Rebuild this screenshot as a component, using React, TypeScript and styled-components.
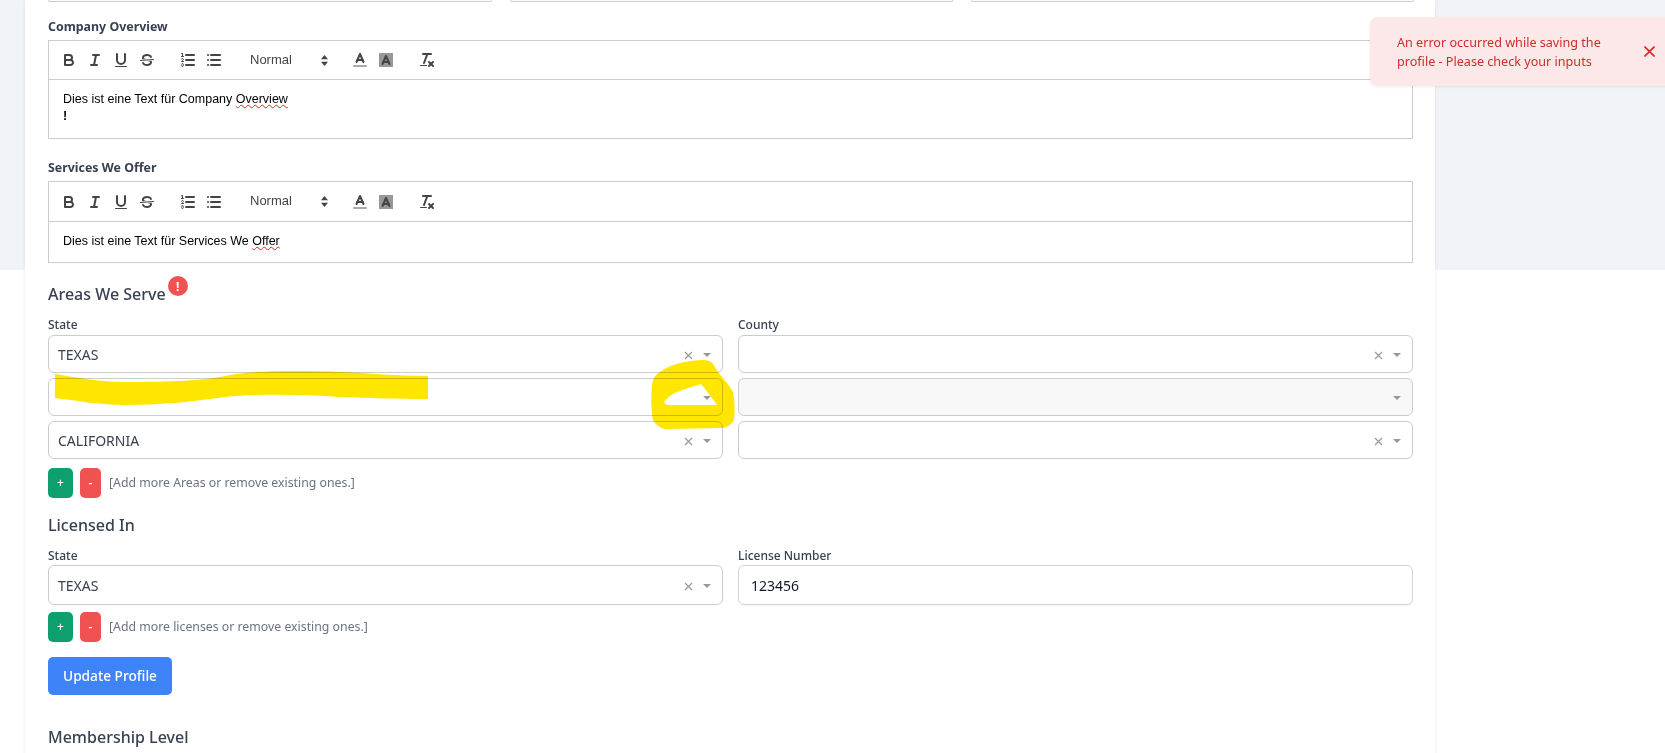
import { FC, ReactNode } from 'react';
import styled, { createGlobalStyle } from 'styled-components';

const GlobalStyle = createGlobalStyle`
  html, body {
    margin: 0;
    padding: 0;
    height: 753px;
    overflow: hidden;
    background: #fff;
  }

  * {
    box-sizing: border-box;
  }
`;

const Page = styled.div`
  position: relative;
  width: 1665px;
  height: 753px;
  overflow: hidden;
  padding-left: 25px;
  background: linear-gradient(#f0f3f8 270px, #fff 270px);
  font-family: 'Noto Sans', 'Open Sans', sans-serif;
  color: #374151;
`;

const Card = styled.main`
  width: 1410px;
  height: 800px;
  padding: 0 22px 0 23px;
  background: #fff;
  box-shadow: 0 0 4px rgba(0, 0, 0, 0.08);
`;

const TopRow = styled.div`
  display: grid;
  grid-template-columns: 444px 443px 443px;
  gap: 18px;
  width: 1365px;
`;

const TopField = styled.div`
  height: 2px;
  border: 1px solid #ccc;
  border-top: 0;
  border-radius: 0 0 6px 6px;
`;

const FieldLabel = styled.label`
  display: block;
  height: 16px;
  font-size: 12px;
  line-height: 16px;
  font-weight: 500;
  color: #374151;
`;

const EditorLabel = styled(FieldLabel)<{ $top: number }>`
  margin: ${({ $top }) => $top}px 0 5px;
  font-size: 12.4px;
  font-weight: 700;
`;

const Editor = styled.div`
  width: 1365px;
  border: 1px solid #ccc;
`;

const Toolbar = styled.div<{ $tall?: boolean }>`
  display: flex;
  align-items: center;
  height: ${({ $tall }) => ($tall ? '40px' : '39px')};
  padding-left: 7px;
  border-bottom: 1px solid #ccc;
`;

const ToolGroup = styled.div`
  display: flex;
  margin-right: 15px;
`;

const ToolButton = styled.span`
  display: block;
  width: 26px;
  height: 24px;
  padding: 3px 4px;
`;

const ToolIcon = styled.svg`
  display: block;
  width: 18px;
  height: 18px;
  fill: none;
  stroke: #444;
  stroke-width: 2;
  stroke-linecap: round;
  stroke-linejoin: round;
`;

const Picker = styled.div`
  display: flex;
  align-items: center;
  justify-content: space-between;
  width: 90px;
  height: 24px;
  margin-right: 15px;
  padding: 0 4px 0 8px;
  font-family: 'Liberation Sans', Arial, sans-serif;
  font-size: 13px;
  color: #444;
`;

const PickerLabel = styled.span`
  margin-top: -2px;
`;

const PickerArrows = styled.svg`
  display: block;
  width: 7px;
  height: 11px;
  fill: #444;
`;

const EditorBody = styled.div<{ $height: number }>`
  height: ${({ $height }) => $height}px;
  padding: 11px 14px 0;
  font-family: 'Liberation Sans', Arial, sans-serif;
  font-size: 12.5px;
  line-height: 17px;
  color: #000;
`;

const Misspelled = styled.span`
  text-decoration: underline wavy #e02424 1px;
  text-underline-offset: 1px;
`;

const HeadingRow = styled.div<{ $top: number }>`
  display: flex;
  align-items: flex-start;
  height: 22px;
  margin-top: ${({ $top }) => $top}px;
`;

const Heading = styled.h3`
  margin: 0;
  font-size: 16px;
  line-height: 20px;
  font-weight: 500;
  color: #374151;
`;

const ErrorBadge = styled.span`
  position: relative;
  top: -8px;
  left: 2px;
  display: flex;
  align-items: center;
  justify-content: center;
  width: 20px;
  height: 20px;
  border-radius: 50%;
  background: #f05252;
  color: #fff;
  font-size: 12px;
  font-weight: 700;
`;

const FieldGrid = styled.div<{ $top: number }>`
  display: grid;
  grid-template-columns: 675px 675px;
  column-gap: 15px;
  margin-top: ${({ $top }) => $top}px;
`;

const Column = styled.div`
  display: flex;
  flex-direction: column;
`;

const Stack = styled.div<{ $top: number }>`
  display: flex;
  flex-direction: column;
  gap: 5px;
  margin-top: ${({ $top }) => $top}px;
`;

const SelectBox = styled.div<{ $disabled?: boolean; $height?: number }>`
  display: flex;
  align-items: center;
  height: ${({ $height }) => $height ?? 38}px;
  padding: 2px 11px 0 9px;
  border: 1px solid #ccc;
  border-radius: 6px;
  background: ${({ $disabled }) => ($disabled ? '#f8f8f8' : '#fff')};
  font-size: 14px;
  color: #374151;
`;

const SelectValue = styled.span`
  flex: 1;
  margin-top: -2px;
`;

const ClearIcon = styled.svg`
  display: block;
  width: 9px;
  height: 9px;
  margin-right: 10px;
  stroke: #999;
  stroke-width: 1.2;
  fill: none;
`;

const CaretIcon = styled.svg`
  display: block;
  width: 8px;
  height: 4px;
  fill: #999;
`;

const TextInput = styled.div`
  display: flex;
  align-items: center;
  height: 40px;
  margin-top: 1px;
  padding: 0 12px;
  border: 1px solid #d1d5db;
  border-radius: 6px;
  box-shadow: 0 1px 2px rgba(0, 0, 0, 0.05);
  font-size: 14px;
  color: #111827;
`;

const ActionRow = styled.div<{ $top: number }>`
  display: flex;
  align-items: center;
  margin-top: ${({ $top }) => $top}px;
`;

const RowButton = styled.button<{ $remove?: boolean }>`
  width: ${({ $remove }) => ($remove ? '21px' : '25px')};
  height: 30px;
  margin-right: 7px;
  padding: 0 0 2px;
  border: 0;
  border-radius: 5px;
  background: ${({ $remove }) => ($remove ? '#f05252' : '#0e9f6e')};
  color: #fff;
  font-family: inherit;
  font-size: 12px;
  font-weight: 500;
`;

const Hint = styled.span`
  margin: -2px 0 0 1px;
  font-size: 12.3px;
  color: #6b7280;
`;

const SubmitButton = styled.button`
  display: block;
  width: 124px;
  height: 38px;
  margin-top: 15px;
  padding: 0 0 2px;
  border: 0;
  border-radius: 5px;
  background: #3f83f8;
  color: #fff;
  font-family: inherit;
  font-size: 13.7px;
  font-weight: 500;
`;

const Toast = styled.div`
  position: absolute;
  top: 17px;
  left: 1370px;
  display: flex;
  align-items: center;
  width: 300px;
  height: 69px;
  padding-left: 27px;
  border-radius: 8px 0 0 8px;
  background: #fce8e8;
  box-shadow: 0 1px 3px rgba(0, 0, 0, 0.08);
  color: #d02b2b;
  font-size: 12.6px;
  line-height: 19px;
`;

const ToastText = styled.p`
  width: 225px;
  margin: 0;
`;

const ToastClose = styled.svg`
  display: block;
  width: 11px;
  height: 11px;
  margin-left: 22px;
  stroke: #e02424;
  stroke-width: 1.6;
  fill: none;
`;

const Scribble = styled.svg`
  position: absolute;
  top: 0;
  left: 0;
  width: 1665px;
  height: 753px;
  pointer-events: none;
  mix-blend-mode: multiply;
`;

const Icon: FC<{ children: ReactNode }> = ({ children }) => (
  <ToolButton>
    <ToolIcon viewBox="0 0 18 18">{children}</ToolIcon>
  </ToolButton>
);

const EditorToolbar: FC<{ tall?: boolean }> = ({ tall }) => (
  <Toolbar $tall={tall}>
    <ToolGroup>
      <Icon>
        <path d="M5,4H9.5A2.5,2.5,0,0,1,12,6.5v0A2.5,2.5,0,0,1,9.5,9H5A0,0,0,0,1,5,9V4A0,0,0,0,1,5,4Z" />
        <path d="M5,9h5.5A2.5,2.5,0,0,1,13,11.5v0A2.5,2.5,0,0,1,10.5,14H5a0,0,0,0,1,0,0V9A0,0,0,0,1,5,9Z" />
      </Icon>
      <Icon>
        <line x1="7" x2="13" y1="4" y2="4" />
        <line x1="5" x2="11" y1="14" y2="14" />
        <line x1="8" x2="10" y1="14" y2="4" />
      </Icon>
      <Icon>
        <path d="M5,3V9a4.012,4.012,0,0,0,4,4H9a4.012,4.012,0,0,0,4-4V3" />
        <rect x="3" y="15" width="12" height="1" rx=".5" fill="#444" stroke="none" />
      </Icon>
      <Icon>
        <line x1="15.5" x2="2.5" y1="8.5" y2="9.5" strokeWidth="1" />
        <path fill="#444" stroke="none" d="M9.007,8C6.542,7.791,6,7.519,6,6.5,6,5.792,7.283,5,9,5c1.571,0,2.765.679,2.969,1.309a1,1,0,0,0,1.9-.617C13.356,4.106,11.354,3,9,3,6.2,3,4,4.538,4,6.5a3.2,3.2,0,0,0,.5,1.843Z" />
        <path fill="#444" stroke="none" d="M8.984,10C11.457,10.208,12,10.479,12,11.5c0,.708-1.283,1.5-3,1.5-1.571,0-2.765-.679-2.969-1.309a1,1,0,1,0-1.9.617C4.644,13.894,6.646,15,9,15c2.8,0,5-1.538,5-3.5a3.2,3.2,0,0,0-.5-1.843Z" />
      </Icon>
    </ToolGroup>
    <ToolGroup>
      <Icon>
        <line x1="7" x2="15" y1="4" y2="4" />
        <line x1="7" x2="15" y1="9" y2="9" />
        <line x1="7" x2="15" y1="14" y2="14" />
        <line x1="2.5" x2="4.5" y1="5.5" y2="5.5" strokeWidth="1" />
        <path fill="#444" stroke="none" d="M3.5,6A0.5,0.5,0,0,1,3,5.5V3.085l-0.276.138A0.5,0.5,0,0,1,2.053,3c-0.124-.247-0.023-0.324.224-0.447l1-.5A0.5,0.5,0,0,1,4,2.5v3A0.5,0.5,0,0,1,3.5,6Z" />
        <path strokeWidth="1" d="M4.5,10.5h-2c0-.234,1.85-1.076,1.85-2.234A0.959,0.959,0,0,0,2.5,8.156" />
        <path strokeWidth="1" d="M2.5,14.846a0.959,0.959,0,0,0,1.85-.109A0.7,0.7,0,0,0,3.75,14a0.688,0.688,0,0,0,.6-0.736,0.959,0.959,0,0,0-1.85-.109" />
      </Icon>
      <Icon>
        <line x1="6" x2="15" y1="4" y2="4" />
        <line x1="6" x2="15" y1="9" y2="9" />
        <line x1="6" x2="15" y1="14" y2="14" />
        <line x1="3" x2="3" y1="4" y2="4" />
        <line x1="3" x2="3" y1="9" y2="9" />
        <line x1="3" x2="3" y1="14" y2="14" />
      </Icon>
    </ToolGroup>
    <Picker>
      <PickerLabel>Normal</PickerLabel>
      <PickerArrows viewBox="0 0 7 11">
        <path d="M3.5 0 7 4.2H0ZM0 6.8h7L3.5 11Z" />
      </PickerArrows>
    </Picker>
    <ToolGroup>
      <Icon>
        <line x1="3" x2="15" y1="15" y2="15" stroke="#aaa" />
        <polyline points="5.5 11 9 3 12.5 11" />
        <line x1="11.63" x2="6.38" y1="9" y2="9" />
      </Icon>
      <Icon>
        <defs>
          <pattern id={tall ? 'dither-b' : 'dither-a'} width="2" height="2" patternUnits="userSpaceOnUse">
            <rect width="1" height="1" fill="#444" />
            <rect x="1" y="1" width="1" height="1" fill="#444" />
          </pattern>
        </defs>
        <rect x="2" y="2" width="14" height="14" stroke="none" fill={`url(#${tall ? 'dither-b' : 'dither-a'})`} opacity="0.55" />
        <polyline points="5.5 13 9 5 12.5 13" />
        <line x1="11.63" x2="6.38" y1="11" y2="11" />
      </Icon>
    </ToolGroup>
    <ToolGroup>
      <Icon>
        <line x1="5" x2="13" y1="3" y2="3" />
        <line x1="6" x2="9.35" y1="12" y2="3" />
        <line x1="11" x2="15" y1="11" y2="15" />
        <line x1="15" x2="11" y1="11" y2="15" />
        <rect x="2" y="14" width="7" height="1" rx=".5" fill="#444" stroke="none" />
      </Icon>
    </ToolGroup>
  </Toolbar>
);

const Select: FC<{ value?: string; clearable?: boolean; disabled?: boolean; height?: number }> = ({
  value,
  clearable = true,
  disabled,
  height,
}) => (
  <SelectBox $disabled={disabled} $height={height}>
    <SelectValue>{value}</SelectValue>
    {clearable && (
      <ClearIcon viewBox="0 0 9 9">
        <path d="M1 1l7 7M8 1 1 8" />
      </ClearIcon>
    )}
    <CaretIcon viewBox="0 0 8 4">
      <path d="M0 0h8L4 4Z" />
    </CaretIcon>
  </SelectBox>
);

const RowActions: FC<{ top: number; hint: string }> = ({ top, hint }) => (
  <ActionRow $top={top}>
    <RowButton type="button">+</RowButton>
    <RowButton type="button" $remove>
      -
    </RowButton>
    <Hint>{hint}</Hint>
  </ActionRow>
);

export default function App() {
  return (
    <Page>
      <GlobalStyle />
      <Card>
        <TopRow>
          <TopField />
          <TopField />
          <TopField />
        </TopRow>

        <EditorLabel $top={17}>Company Overview</EditorLabel>
        <Editor>
          <EditorToolbar />
          <EditorBody $height={58}>
            Dies ist eine Text für Company <Misspelled>Overview</Misspelled>
            <br />
            <b>!</b>
          </EditorBody>
        </Editor>

        <EditorLabel $top={21}>Services We Offer</EditorLabel>
        <Editor>
          <EditorToolbar tall />
          <EditorBody $height={40}>
            Dies ist eine Text für Services We <Misspelled>Offer</Misspelled>
          </EditorBody>
        </Editor>

        <HeadingRow $top={21}>
          <Heading>Areas We Serve</Heading>
          <ErrorBadge>!</ErrorBadge>
        </HeadingRow>
        <FieldGrid $top={11}>
          <Column>
            <FieldLabel>State</FieldLabel>
            <Stack $top={2}>
              <Select value="TEXAS" />
              <Select clearable={false} />
              <Select value="CALIFORNIA" />
            </Stack>
          </Column>
          <Column>
            <FieldLabel>County</FieldLabel>
            <Stack $top={2}>
              <Select />
              <Select clearable={false} disabled />
              <Select />
            </Stack>
          </Column>
        </FieldGrid>
        <RowActions top={9} hint="[Add more Areas or remove existing ones.]" />

        <HeadingRow $top={17}>
          <Heading>Licensed In</Heading>
        </HeadingRow>
        <FieldGrid $top={11}>
          <Column>
            <FieldLabel>State</FieldLabel>
            <Stack $top={1}>
              <Select value="TEXAS" height={40} />
            </Stack>
          </Column>
          <Column>
            <FieldLabel>License Number</FieldLabel>
            <TextInput>123456</TextInput>
          </Column>
        </FieldGrid>
        <RowActions top={7} hint="[Add more licenses or remove existing ones.]" />

        <SubmitButton type="button">Update Profile</SubmitButton>

        <HeadingRow $top={32}>
          <Heading>Membership Level</Heading>
        </HeadingRow>
      </Card>

      <Toast>
        <ToastText>An error occurred while saving the profile - Please check your inputs</ToastText>
        <ToastClose viewBox="0 0 11 11">
          <path d="M.5.5l10 10M10.5.5l-10 10" />
        </ToastClose>
      </Toast>

      <Scribble viewBox="0 0 1665 753">
        <path
          fill="#ffe600"
          d="M55 374C80 378 100 382 125 382C170 382 205 381 230 375C250 371 300 370 340 372C370 373 395 376 428 376L428 399C395 399 370 398 340 397C300 394 250 394 225 397C190 402 160 405 125 405C100 405 80 401 55 398Z"
        />
        <path
          fill="#ffe600"
          fillRule="evenodd"
          d="M652 385C653 378 656 374 660 372C665 368 672 365 680 363C688 361 698 360 703 360C708 360 711 361 713 364C716 369 719 373 722 377C727 383 731 388 733 392C735 402 735 412 734 420C732 424 728 427 723 428L665 429C660 428 655 424 653 420C651 410 651 395 652 385ZM664 402C668 397 672 394 677 392C685 389 694 386 701 384C706 390 712 398 717 405L668 405C666 405 665 403 664 402Z"
        />
      </Scribble>
    </Page>
  );
}
